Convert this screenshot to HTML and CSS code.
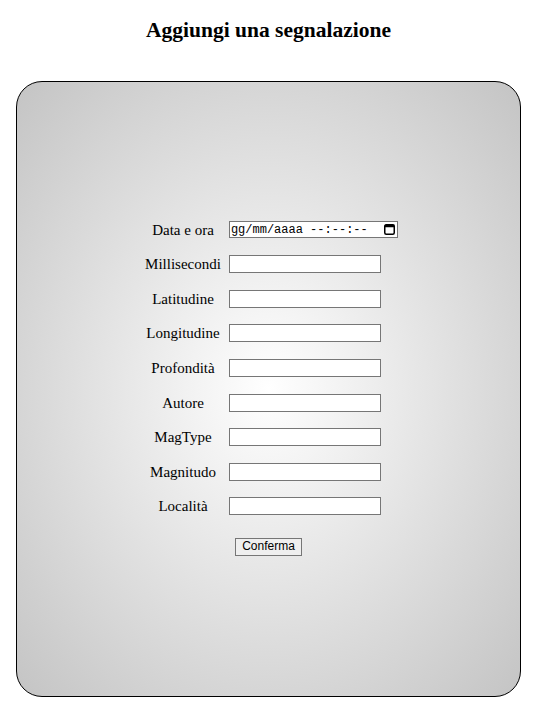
FILE: index.html
```html
<!DOCTYPE html>
<html lang="it">
<head>
<meta charset="utf-8">
<link rel="stylesheet" href="styles.css">
</head>
<body>
<h2 class="title">Aggiungi una segnalazione</h2>
<div class="panel">
  <form class="form">
    <table class="fields">
      <tr><td class="lbl">Data e ora</td><td>
        <span class="dtwrap">
          <input class="inp dt" type="text" placeholder="gg/mm/aaaa --:--:--">
          <svg class="cal" width="11" height="12" viewBox="0 0 11 12" aria-hidden="true">
            <rect x="0.75" y="1.75" width="9.5" height="9.5" rx="1.5" fill="none" stroke="#000" stroke-width="1.5"/>
            <rect x="0.75" y="1.75" width="9.5" height="2.5" fill="#000"/>
          </svg>
        </span>
      </td></tr>
      <tr><td class="lbl">Millisecondi</td><td><input class="inp" type="text"></td></tr>
      <tr><td class="lbl">Latitudine</td><td><input class="inp" type="text"></td></tr>
      <tr><td class="lbl">Longitudine</td><td><input class="inp" type="text"></td></tr>
      <tr><td class="lbl">Profondità</td><td><input class="inp" type="text"></td></tr>
      <tr><td class="lbl">Autore</td><td><input class="inp" type="text"></td></tr>
      <tr><td class="lbl">MagType</td><td><input class="inp" type="text"></td></tr>
      <tr><td class="lbl">Magnitudo</td><td><input class="inp" type="text"></td></tr>
      <tr><td class="lbl">Località</td><td><input class="inp" type="text"></td></tr>
    </table>
    <button class="btn" type="button">Conferma</button>
  </form>
</div>
</body>
</html>
```
FILE: styles.css
```css
html, body {
  margin: 0;
  padding: 0;
}
body {
  font-family: "Liberation Serif", serif;
  font-size: 15px;
  color: #000;
  background: #fff;
  padding: 1px 16px 0 16px;
}
.title {
  width: 505px;
  text-align: center;
  font-size: 21.5px;
  font-weight: bold;
  margin: 15px 0 0 0;
  line-height: 28px;
}
.panel {
  margin-top: 37px;
  width: 503px;
  height: 614px;
  border: 1px solid #000;
  border-radius: 26px;
  background: radial-gradient(ellipse at center, #ffffff 0%, #c4c4c4 100%);
  display: flex;
  align-items: center;
  justify-content: center;
}
.form {
  display: flex;
  flex-direction: column;
  align-items: center;
  margin-top: -10px;
}
.fields {
  border-collapse: collapse;
  margin-left: 6px;
}
.fields td {
  padding: 8.3px 4px 8.3px 4px;
  vertical-align: middle;
  line-height: 18px;
}
.lbl {
  text-align: center;
}
.inp {
  display: block;
  box-sizing: border-box;
  width: 152px;
  height: 18px;
  border: 1px solid #767676;
  border-radius: 0;
  background: #fff;
  padding: 1px 2px;
  font-family: "Liberation Mono", monospace;
  font-size: 12px;
  margin: 0;
}
.dtwrap {
  position: relative;
  display: block;
  width: 169px;
}
.dt {
  width: 169px;
  height: 17px;
  padding: 0 1px;
}
.dt::placeholder {
  color: #000;
  opacity: 1;
}
.cal {
  position: absolute;
  right: 3px;
  top: 2px;
}
.btn {
  margin-top: 14px;
  font-family: "Liberation Sans", Arial, sans-serif;
  font-size: 12px;
  padding: 0 6px;
  border: 1px solid #767676;
  border-radius: 0;
  background: #efefef;
  color: #000;
  height: 18px;
  line-height: 15px;
}
```
